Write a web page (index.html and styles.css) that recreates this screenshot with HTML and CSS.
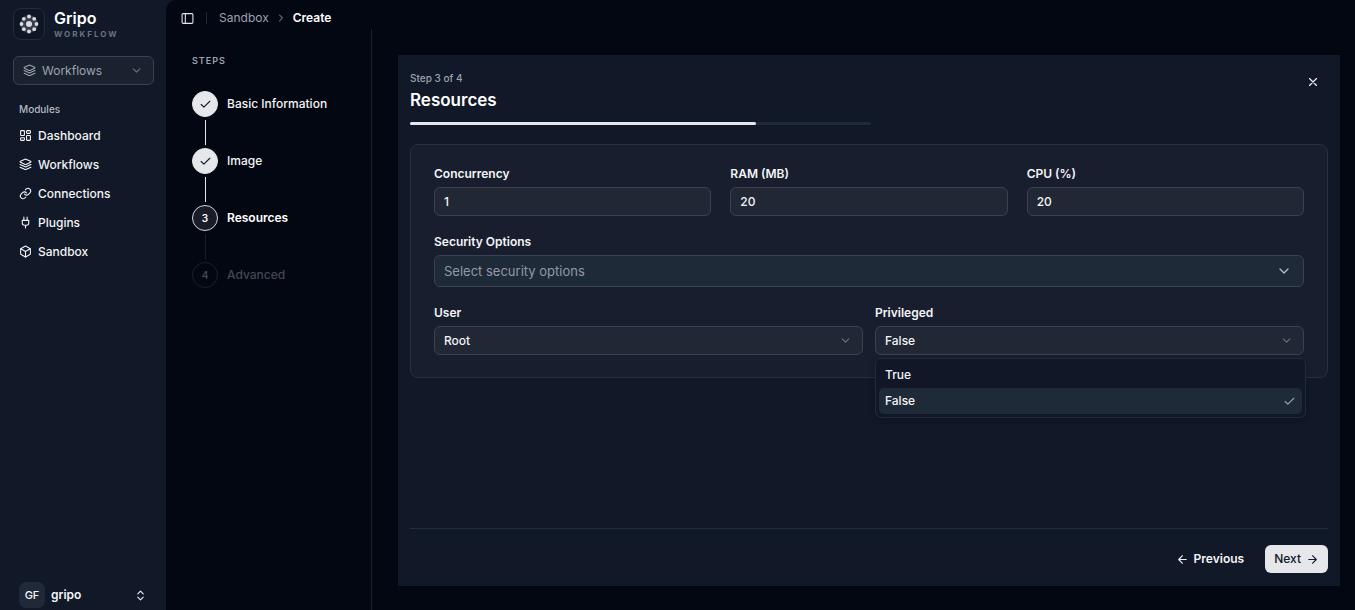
FILE: index.html
```
<!DOCTYPE html>
<html lang="en">
<head>
    <meta charset="UTF-8">
    <meta name="viewport" content="width=device-width, initial-scale=1.0">
    <title>Gripo Workflow - Create Sandbox</title>
    <link rel="stylesheet" href="styles.css">
</head>
<body>
    <aside class="sidebar">
        <div class="brand">
            <div class="brand-logo">
                <svg width="22" height="22" viewBox="0 0 22 22" fill="#d9dce2">
                    <circle class="logo-glow" cx="11" cy="11" r="9"/>
                    <circle cx="11" cy="11" r="3"/>
                    <circle cx="11" cy="3.5" r="1.9"/>
                    <circle cx="16.2" cy="5.8" r="1.9"/>
                    <circle cx="18.5" cy="11" r="1.9"/>
                    <circle cx="16.2" cy="16.2" r="1.9"/>
                    <circle cx="11" cy="18.5" r="1.9"/>
                    <circle cx="5.8" cy="16.2" r="1.9"/>
                    <circle cx="3.5" cy="11" r="1.9"/>
                    <circle cx="5.8" cy="5.8" r="1.9"/>
                </svg>
            </div>
            <div>
                <div class="brand-name">Gripo</div>
                <div class="brand-sub">WORKFLOW</div>
            </div>
        </div>

        <div class="select-box switcher">
            <svg class="icon select-lead" viewBox="0 0 24 24"><path d="m12.8 2.2a2 2 0 0 0-1.7 0L2.6 6.1a1 1 0 0 0 0 1.8l8.6 3.9a2 2 0 0 0 1.7 0l8.6-3.9a1 1 0 0 0 0-1.8z"/><path d="m2 12 9.2 4.2a2 2 0 0 0 1.6 0L22 12"/><path d="m2 17 9.2 4.2a2 2 0 0 0 1.6 0L22 17"/></svg>
            <select aria-label="Section">
                <option>Workflows</option>
            </select>
            <svg class="icon select-arrow" viewBox="0 0 24 24"><path d="m6 9 6 6 6-6"/></svg>
        </div>

        <nav class="nav">
            <div class="nav-title">Modules</div>
            <a href="#"><svg class="icon" viewBox="0 0 24 24"><rect x="3" y="3" width="7" height="9" rx="1"/><rect x="14" y="3" width="7" height="5" rx="1"/><rect x="14" y="12" width="7" height="9" rx="1"/><rect x="3" y="16" width="7" height="5" rx="1"/></svg>Dashboard</a>
            <a href="#"><svg class="icon" viewBox="0 0 24 24"><path d="m12.8 2.2a2 2 0 0 0-1.7 0L2.6 6.1a1 1 0 0 0 0 1.8l8.6 3.9a2 2 0 0 0 1.7 0l8.6-3.9a1 1 0 0 0 0-1.8z"/><path d="m2 12 9.2 4.2a2 2 0 0 0 1.6 0L22 12"/><path d="m2 17 9.2 4.2a2 2 0 0 0 1.6 0L22 17"/></svg>Workflows</a>
            <a href="#"><svg class="icon" viewBox="0 0 24 24"><path d="M10 13a5 5 0 0 0 7.5.5l3-3a5 5 0 0 0-7-7l-1.8 1.7"/><path d="M14 11a5 5 0 0 0-7.5-.5l-3 3a5 5 0 0 0 7 7l1.8-1.7"/></svg>Connections</a>
            <a href="#"><svg class="icon" viewBox="0 0 24 24"><path d="M12 22v-5M9 8V2M15 8V2M18 8v5a4 4 0 0 1-4 4h-4a4 4 0 0 1-4-4V8z"/></svg>Plugins</a>
            <a href="#"><svg class="icon" viewBox="0 0 24 24"><path d="M21 8a2 2 0 0 0-1-1.7l-7-4a2 2 0 0 0-2 0l-7 4A2 2 0 0 0 3 8v8a2 2 0 0 0 1 1.7l7 4a2 2 0 0 0 2 0l7-4a2 2 0 0 0 1-1.7z"/><path d="m3.3 7 8.7 5 8.7-5M12 22V12"/></svg>Sandbox</a>
        </nav>

        <button class="user" type="button">
            <span class="avatar">GF</span>
            <span class="user-name">gripo</span>
            <svg class="icon" viewBox="0 0 24 24"><path d="m7 15 5 5 5-5M7 9l5-5 5 5"/></svg>
        </button>
    </aside>

    <main class="main">
        <header class="topbar">
            <button class="icon-btn" type="button" aria-label="Toggle sidebar">
                <svg class="icon" viewBox="0 0 24 24"><rect x="2" y="3" width="20" height="18" rx="2"/><path d="M8 3v18"/></svg>
            </button>
            <span class="divider"></span>
            <a href="#">Sandbox</a>
            <svg class="icon crumb-arrow" viewBox="0 0 24 24"><path d="m9 18 6-6-6-6"/></svg>
            <span class="crumb-current">Create</span>
        </header>

        <div class="content">
            <section class="steps">
                <h2>STEPS</h2>
                <ol>
                    <li class="done">
                        <span class="step-dot"><svg class="icon" viewBox="0 0 24 24"><path d="M20 6 9 17l-5-5"/></svg></span>
                        <span>Basic Information</span>
                    </li>
                    <li class="done">
                        <span class="step-dot"><svg class="icon" viewBox="0 0 24 24"><path d="M20 6 9 17l-5-5"/></svg></span>
                        <span>Image</span>
                    </li>
                    <li class="current">
                        <span class="step-dot">3</span>
                        <span>Resources</span>
                    </li>
                    <li class="pending">
                        <span class="step-dot">4</span>
                        <span>Advanced</span>
                    </li>
                </ol>
            </section>

            <form class="panel">
                <div class="panel-head">
                    <div class="panel-title">
                        <p>Step 3 of 4</p>
                        <h1>Resources</h1>
                        <div class="progress"><div class="progress-bar" style="width: 75%"></div></div>
                    </div>
                    <button class="icon-btn close" type="button" aria-label="Close">
                        <svg class="icon" viewBox="0 0 24 24"><path d="M18 6 6 18M6 6l12 12"/></svg>
                    </button>
                </div>

                <div class="card">
                    <div class="row row-3">
                        <div class="field">
                            <label for="concurrency">Concurrency</label>
                            <input id="concurrency" type="text" inputmode="numeric" value="1">
                        </div>
                        <div class="field">
                            <label for="ram">RAM (MB)</label>
                            <input id="ram" type="text" inputmode="numeric" value="20">
                        </div>
                        <div class="field">
                            <label for="cpu">CPU (%)</label>
                            <input id="cpu" type="text" inputmode="numeric" value="20">
                        </div>
                    </div>

                    <div class="field">
                        <label for="security">Security Options</label>
                        <div class="select-box select-large">
                            <select id="security">
                                <option>Select security options</option>
                            </select>
                            <svg class="icon select-arrow" viewBox="0 0 24 24"><path d="m6 9 6 6 6-6"/></svg>
                        </div>
                    </div>

                    <div class="row row-2">
                        <div class="field">
                            <label for="user">User</label>
                            <div class="select-box">
                                <select id="user">
                                    <option>Root</option>
                                </select>
                                <svg class="icon select-arrow" viewBox="0 0 24 24"><path d="m6 9 6 6 6-6"/></svg>
                            </div>
                        </div>
                        <div class="field">
                            <label for="privileged">Privileged</label>
                            <div class="select-box">
                                <select id="privileged">
                                    <option>True</option>
                                    <option selected>False</option>
                                </select>
                                <svg class="icon select-arrow" viewBox="0 0 24 24"><path d="m6 9 6 6 6-6"/></svg>
                                <ul class="menu" role="listbox" aria-label="Privileged">
                                    <li role="option" aria-selected="false">True</li>
                                    <li role="option" aria-selected="true">False
                                        <svg class="icon" viewBox="0 0 24 24"><path d="M20 6 9 17l-5-5"/></svg>
                                    </li>
                                </ul>
                            </div>
                        </div>
                    </div>
                </div>

                <div class="panel-foot">
                    <button class="btn" type="button">
                        <svg class="icon" viewBox="0 0 24 24"><path d="m12 19-7-7 7-7M19 12H5"/></svg>Previous
                    </button>
                    <button class="btn btn-primary" type="button">
                        Next<svg class="icon" viewBox="0 0 24 24"><path d="M5 12h14M12 5l7 7-7 7"/></svg>
                    </button>
                </div>
            </form>
        </div>
    </main>
</body>
</html>
```

FILE: styles.css
```
* {
    box-sizing: border-box;
}
body {
    margin: 0;
    min-height: 100vh;
    display: flex;
    background-color: #111827;
    color: #f3f4f6;
    font-family: Inter, sans-serif;
    font-size: 12px;
    font-weight: 500;
    line-height: 16px;
}
h1, h2, p, ol, ul {
    margin: 0;
    padding: 0;
    list-style: none;
}
a {
    color: inherit;
    text-decoration: none;
}
button, input, select {
    font: inherit;
    color: inherit;
}
button {
    padding: 0;
    border: none;
    background: none;
    cursor: pointer;
}
.icon {
    width: 13px;
    height: 13px;
    flex-shrink: 0;
    fill: none;
    stroke: currentColor;
    stroke-width: 2;
    stroke-linecap: round;
    stroke-linejoin: round;
}
.icon-btn {
    display: flex;
}

/* Sidebar */
.sidebar {
    width: 166px;
    flex-shrink: 0;
    padding: 8px 12px 2px 13px;
    display: flex;
    flex-direction: column;
}
.brand {
    display: flex;
    align-items: center;
    gap: 9px;
    height: 32px;
}
.brand-logo {
    width: 32px;
    height: 32px;
    display: flex;
    align-items: center;
    justify-content: center;
    border: 1px solid #242c3a;
    border-radius: 8px;
    background-color: #0e1524;
}
.logo-glow {
    opacity: 0.2;
}
.brand-name {
    font-size: 16px;
    line-height: 20px;
    font-weight: 600;
    color: #fff;
}
.brand-sub {
    font-size: 8px;
    line-height: 12px;
    font-weight: 700;
    letter-spacing: 2px;
    color: #6b7280;
}
.nav {
    display: flex;
    flex-direction: column;
    padding: 0 6px;
}
.nav-title {
    margin-bottom: 4px;
    font-size: 10px;
    color: #b4b9c2;
}
.nav a {
    display: flex;
    align-items: center;
    gap: 6px;
    height: 29px;
}
.user {
    margin-top: auto;
    padding: 0 7px 0 6px;
    display: flex;
    align-items: center;
    gap: 6px;
    text-align: left;
}
.avatar {
    width: 26px;
    height: 26px;
    line-height: 26px;
    text-align: center;
    border-radius: 7px;
    background-color: #1f2937;
    font-size: 11px;
}
.user-name {
    flex: 1;
    font-weight: 600;
}

/* Inputs */
input, select {
    width: 100%;
    height: 29px;
    padding: 0 9px;
    border: 1px solid #3a4150;
    border-radius: 6px;
    background-color: #212735;
    outline: none;
}
select {
    appearance: none;
}
.select-box {
    position: relative;
}
.select-lead, .select-arrow {
    position: absolute;
    top: 8px;
    pointer-events: none;
}
.select-lead {
    left: 10px;
}
.select-arrow {
    right: 11px;
    color: #6b7280;
}
.switcher {
    margin: 16px 0;
    color: #9ca3af;
}
.switcher select {
    padding-left: 28px;
    background-color: #1a2230;
    font-weight: 400;
}
.select-large select {
    height: 32px;
    background-color: #1f2a38;
    color: #9199a5;
    font-size: 13px;
    font-weight: 400;
}
.select-large .select-arrow {
    right: 12px;
    width: 16px;
    height: 16px;
    color: #b4b9c2;
}

/* Main area */
.main {
    flex: 1;
    min-width: 0;
    display: flex;
    flex-direction: column;
    border-top-left-radius: 10px;
    background-color: #030711;
}
.topbar {
    display: flex;
    align-items: center;
    padding: 10px 15px 3px;
    gap: 12px;
    color: #9ca3af;
    font-weight: 400;
}
.topbar .icon-btn {
    color: #e5e7eb;
}
.divider {
    width: 1px;
    height: 12px;
    background-color: #1f2937;
}
.crumb-arrow {
    width: 12px;
    height: 12px;
    margin: 0 -6px;
}
.crumb-current {
    color: #fff;
    font-weight: 600;
}
.content {
    flex: 1;
    display: flex;
}

/* Steps */
.steps {
    width: 206px;
    flex-shrink: 0;
    padding: 24px 26px;
    border-right: 1px solid #1b202b;
}
.steps h2 {
    margin-bottom: 22px;
    font-size: 9px;
    line-height: 16px;
    font-weight: 600;
    letter-spacing: 1px;
    color: #9ca3af;
}
.steps li {
    display: grid;
    grid-template-columns: 26px 1fr;
    align-items: center;
    column-gap: 9px;
}
.steps li:not(:last-child)::after {
    content: "";
    justify-self: center;
    width: 1px;
    height: 25px;
    margin: 3px 0;
    background-color: #1b202b;
}
.steps li.done::after {
    background-color: #e5e7eb;
}
.step-dot {
    width: 26px;
    height: 26px;
    display: flex;
    align-items: center;
    justify-content: center;
    border: 1px solid #1b202b;
    border-radius: 50%;
    font-size: 10px;
    font-weight: 600;
}
.done .step-dot {
    border-color: #e5e7eb;
    background-color: #e5e7eb;
    color: #111827;
}
.current {
    color: #fff;
    font-weight: 600;
}
.current .step-dot {
    border-color: #d1d5db;
    background-color: #1a1d28;
}
.pending {
    color: #434853;
}

/* Panel */
.panel {
    flex: 1;
    min-width: 0;
    margin: 26px 15px 24px 26px;
    padding: 12px;
    display: flex;
    flex-direction: column;
    background-color: #111827;
}
.panel-head {
    display: flex;
    justify-content: space-between;
    align-items: flex-start;
    margin-bottom: 19px;
}
.panel-title {
    flex: 1;
    padding-top: 3px;
}
.panel-title p {
    font-size: 10px;
    line-height: 16px;
    color: #9ca3af;
}
.panel-title h1 {
    margin: 4px 0 11px;
    font-size: 17px;
    line-height: 21px;
    font-weight: 600;
    color: #fff;
}
.progress {
    max-width: 461px;
    height: 3px;
    border-radius: 2px;
    background-color: #1f2937;
}
.progress-bar {
    height: 100%;
    border-radius: 2px;
    background-color: #e5e7eb;
}
.close {
    padding: 8px;
}
.close .icon {
    width: 14px;
    height: 14px;
}
.card {
    display: flex;
    flex-direction: column;
    gap: 18px;
    padding: 21px 23px 22px;
    border: 1px solid #283041;
    border-radius: 8px;
    background-color: #181e2e;
}
.row {
    display: grid;
}
.row-3 {
    grid-template-columns: repeat(3, 1fr);
    gap: 19px;
}
.row-2 {
    grid-template-columns: repeat(2, 1fr);
    gap: 12px;
}
.field {
    display: flex;
    flex-direction: column;
    gap: 5px;
}
.field label {
    font-weight: 600;
}
.menu {
    position: absolute;
    top: 32px;
    left: 0;
    right: -2px;
    padding: 3px;
    border: 1px solid #232b39;
    border-radius: 6px;
    background-color: #111726;
    box-shadow: 0 2px 6px rgba(0, 0, 0, 0.2);
}
.menu li {
    display: flex;
    align-items: center;
    justify-content: space-between;
    height: 26px;
    padding: 0 6px;
    border-radius: 5px;
}
.menu li[aria-selected="true"] {
    background-color: #1f2a38;
}
.menu .icon {
    color: #9ca3af;
}
.panel-foot {
    display: flex;
    justify-content: flex-end;
    gap: 12px;
    margin-top: auto;
    padding: 16px 0 1px;
    border-top: 1px solid #242d3b;
}
.btn {
    display: flex;
    align-items: center;
    gap: 5px;
    height: 28px;
    padding: 0 9px;
    border-radius: 6px;
    font-weight: 600;
}
.btn-primary {
    background-color: #e5e7eb;
    color: #111827;
    font-weight: 500;
}
```
